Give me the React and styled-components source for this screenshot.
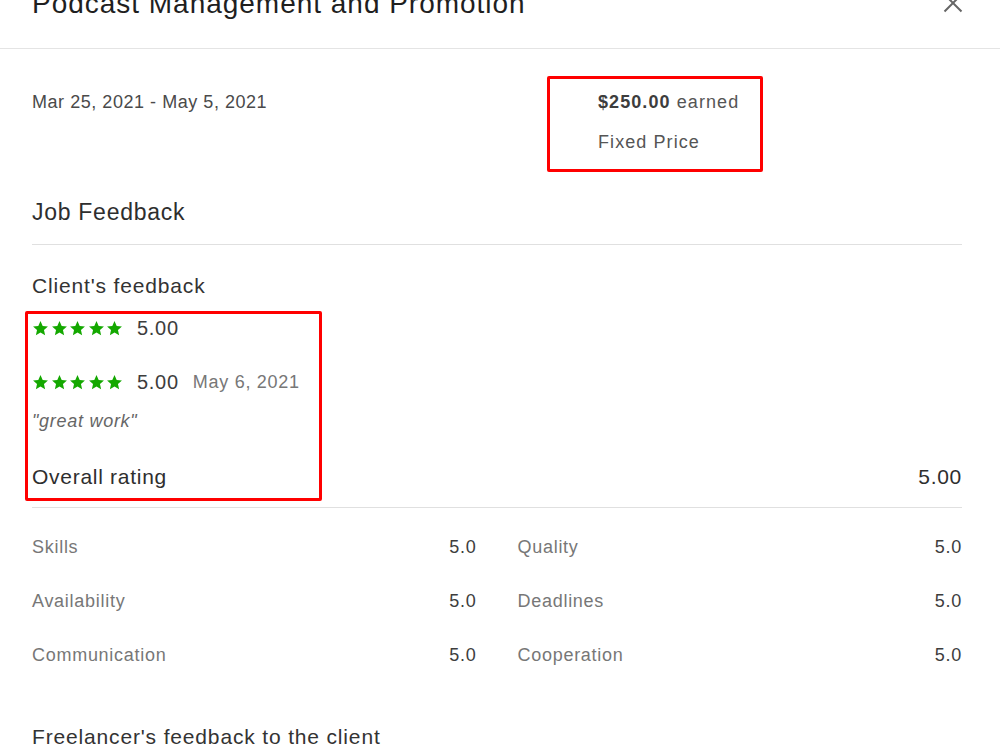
import styled, { createGlobalStyle } from "styled-components";

const GlobalStyle = createGlobalStyle`
  html, body {
    margin: 0;
    padding: 0;
    background: #ffffff;
    overflow: hidden;
  }

  body {
    font-family: "Liberation Sans", Arial, sans-serif;
    letter-spacing: 0.045em;
    color: #222;
  }
`;

const Modal = styled.div`
  width: 1000px;
  height: 751px;
  background: #fff;
  overflow: hidden;
`;

const Header = styled.header`
  height: 48px;
  border-bottom: 1px solid #e4e4e4;
  padding: 0 38px 0 32px;
  display: flex;
  align-items: flex-start;
  justify-content: space-between;
`;

const Title = styled.h2`
  margin: -10px 0 0;
  font-size: 28px;
  line-height: 28px;
  font-weight: 400;
  letter-spacing: 0.035em;
  color: #1f1f1f;
`;

const CloseButton = styled.button`
  margin: -7px -1px 0 0;
  padding: 0;
  border: 0;
  background: none;
  color: #666;
  display: flex;

  svg {
    width: 20px;
    height: 20px;
  }
`;

const Content = styled.div`
  padding: 0 38px 0 32px;
`;

const TopRow = styled.section`
  position: relative;
  display: grid;
  grid-template-columns: 566px 1fr;
  padding-top: 43px;
`;

const Highlight = styled.div`
  position: absolute;
  top: ${(p) => p.top}px;
  left: ${(p) => p.left}px;
  width: ${(p) => p.width}px;
  height: ${(p) => p.height}px;
  box-sizing: border-box;
  border: 3px solid #ff0000;
  border-radius: 2px;
  pointer-events: none;
`;

const DateRange = styled.p`
  margin: 0;
  font-size: 18px;
  line-height: 20px;
  letter-spacing: 0.03em;
  color: #4a4a4a;
`;

const Price = styled.div`
  display: flex;
  flex-direction: column;
  gap: 20px;
  font-size: 18px;
  line-height: 20px;
  letter-spacing: 0.06em;
  color: #555;

  p {
    margin: 0;
  }

  strong {
    font-weight: 600;
    color: #3d3d3d;
  }
`;

const SectionTitle = styled.h3`
  margin: 46px 0 0;
  padding-bottom: 18px;
  border-bottom: 1px solid #e0e0e0;
  font-size: 23px;
  line-height: 28px;
  font-weight: 400;
  color: #2e2e2e;
`;

const Feedback = styled.section`
  position: relative;
  padding: 29px 0 18px;
  border-bottom: 1px solid #e0e0e0;
`;

const SubTitle = styled.h4`
  margin: ${(p) => p.gap || 0}px 0 0;
  font-size: 21px;
  line-height: 24px;
  font-weight: 400;
  letter-spacing: 0.04em;
  color: #333;
`;

const RatingRow = styled.div`
  margin-top: ${(p) => p.gap}px;
  height: 24px;
  display: flex;
  align-items: center;
  gap: 14px;
`;

const Stars = styled.div`
  display: flex;
  gap: 1.5px;

  svg {
    width: 17px;
    height: 17px;
    fill: #14a800;
  }
`;

const Score = styled.span`
  font-size: 20px;
  line-height: 24px;
  color: #3d3d3d;
`;

const RatingDate = styled.span`
  font-size: 18px;
  line-height: 24px;
  letter-spacing: 0.04em;
  color: #777;
`;

const Comment = styled.p`
  margin: 16px 0 0;
  font-size: 18px;
  line-height: 22px;
  font-style: italic;
  color: #666;
`;

const OverallRow = styled.div`
  margin-top: 33px;
  display: flex;
  justify-content: space-between;
  font-size: 21px;
  line-height: 24px;
  color: #2e2e2e;
`;

const Breakdown = styled.dl`
  margin: 28px 0 0;
  display: grid;
  grid-template-columns: 1fr 1fr;
  column-gap: 41px;
  row-gap: 32px;
`;

const BreakdownItem = styled.div`
  display: flex;
  justify-content: space-between;
  font-size: 18px;
  line-height: 22px;

  dt {
    color: #777;
  }

  dd {
    margin: 0;
    color: #3d3d3d;
  }
`;

const Star = () => (
  <svg viewBox="0 0 24 24">
    <path d="M12 1.5l3.1 6.9 7.4.8-5.6 5 1.6 7.4L12 17.8l-6.5 3.8 1.6-7.4-5.6-5 7.4-.8z" />
  </svg>
);

const FiveStars = () => (
  <Stars>
    {[0, 1, 2, 3, 4].map((i) => (
      <Star key={i} />
    ))}
  </Stars>
);

const breakdown = [
  ["Skills", "5.0"],
  ["Quality", "5.0"],
  ["Availability", "5.0"],
  ["Deadlines", "5.0"],
  ["Communication", "5.0"],
  ["Cooperation", "5.0"],
];

export default function App() {
  return (
    <>
      <GlobalStyle />
      <Modal>
        <Header>
          <Title>Podcast Management and Promotion</Title>
          <CloseButton aria-label="Close">
            <svg viewBox="0 0 20 20" fill="none" stroke="currentColor" strokeWidth="2">
              <path d="M1.5 1.5l17 17M18.5 1.5l-17 17" />
            </svg>
          </CloseButton>
        </Header>

        <Content>
          <TopRow>
            <DateRange>Mar 25, 2021 - May 5, 2021</DateRange>
            <Price>
              <p>
                <strong>$250.00</strong> earned
              </p>
              <p>Fixed Price</p>
            </Price>
            <Highlight top={27} left={515} width={216} height={96} />
          </TopRow>

          <SectionTitle>Job Feedback</SectionTitle>

          <Feedback>
            <SubTitle>Client's feedback</SubTitle>
            <RatingRow gap={18}>
              <FiveStars />
              <Score>5.00</Score>
            </RatingRow>
            <RatingRow gap={30}>
              <FiveStars />
              <Score>5.00</Score>
              <RatingDate>May 6, 2021</RatingDate>
            </RatingRow>
            <Comment>"great work"</Comment>
            <OverallRow>
              <span>Overall rating</span>
              <span>5.00</span>
            </OverallRow>
            <Highlight top={66} left={-7} width={297} height={190} />
          </Feedback>

          <Breakdown>
            {breakdown.map(([label, value]) => (
              <BreakdownItem key={label}>
                <dt>{label}</dt>
                <dd>{value}</dd>
              </BreakdownItem>
            ))}
          </Breakdown>

          <SubTitle gap={59}>Freelancer's feedback to the client</SubTitle>
        </Content>
      </Modal>
    </>
  );
}
